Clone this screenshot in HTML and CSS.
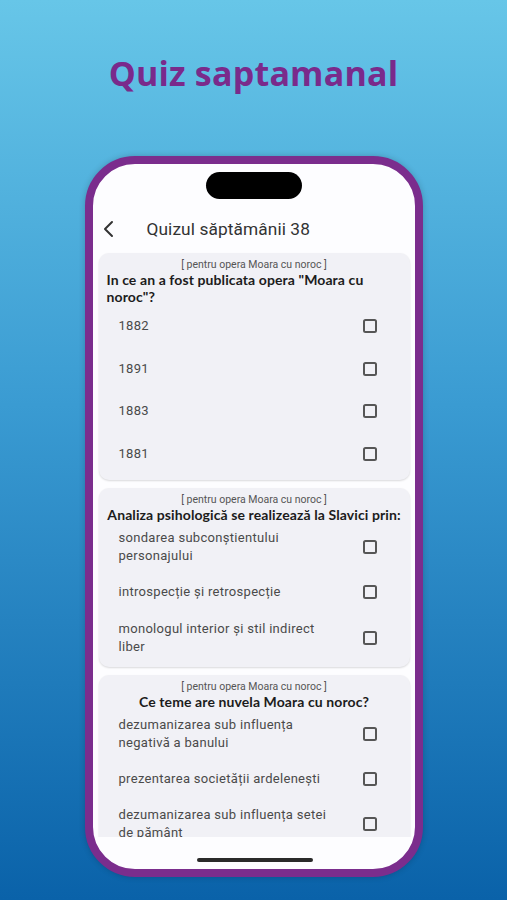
FILE: index.html
```html
<!DOCTYPE html>
<html lang="ro">
<head>
<meta charset="utf-8">
<title>Quiz saptamanal</title>
<link rel="stylesheet" href="styles.css">
</head>
<body>
<div class="page">
  <h1 class="title">Quiz saptamanal</h1>
  <div class="phone">
    <div class="status"><div class="island"></div></div>
    <div class="header">
      <svg class="back" width="12" height="18" viewBox="0 0 12 18"><path d="M9 2 L2 9 L9 16" fill="none" stroke="#333" stroke-width="2" stroke-linecap="round" stroke-linejoin="round"/></svg>
      <span class="header-title">Quizul săptămânii 38</span>
    </div>
    <div class="list">
      <div class="card">
        <div class="label">[ pentru opera Moara cu noroc ]</div>
        <div class="question">In ce an a fost publicata opera "Moara cu noroc"?</div>
        <div class="option"><span class="opt-text">1882</span><span class="box"></span></div>
        <div class="option"><span class="opt-text">1891</span><span class="box"></span></div>
        <div class="option"><span class="opt-text">1883</span><span class="box"></span></div>
        <div class="option"><span class="opt-text">1881</span><span class="box"></span></div>
      </div>
      <div class="card">
        <div class="label">[ pentru opera Moara cu noroc ]</div>
        <div class="question">Analiza psihologică se realizează la Slavici prin:</div>
        <div class="option"><span class="opt-text">sondarea subconștientului personajului</span><span class="box"></span></div>
        <div class="option"><span class="opt-text">introspecție și retrospecție</span><span class="box"></span></div>
        <div class="option"><span class="opt-text">monologul interior și stil indirect liber</span><span class="box"></span></div>
      </div>
      <div class="card">
        <div class="label">[ pentru opera Moara cu noroc ]</div>
        <div class="question">Ce teme are nuvela Moara cu noroc?</div>
        <div class="option"><span class="opt-text">dezumanizarea sub influența negativă a banului</span><span class="box"></span></div>
        <div class="option"><span class="opt-text">prezentarea societății ardelenești</span><span class="box"></span></div>
        <div class="option"><span class="opt-text">dezumanizarea sub influența setei de pământ</span><span class="box"></span></div>
      </div>
    </div>
    <div class="bottom"><div class="home"></div></div>
  </div>
</div>
</body>
</html>
```

FILE: styles.css
```css
html, body {
  margin: 0;
  padding: 0;
}
body {
  width: 507px;
  height: 900px;
  overflow: hidden;
  background: linear-gradient(180deg, #67c6e8 0%, #3a9bd2 45%, #0a62a9 100%);
  font-family: Roboto, "Noto Sans", sans-serif;
}
.page {
  display: flex;
  flex-direction: column;
  align-items: center;
}
.title {
  margin: 52px 0 0;
  height: 42px;
  line-height: 42px;
  font-family: "Open Sans", sans-serif;
  font-weight: 700;
  font-size: 34px;
  color: #7a2a8b;
  letter-spacing: 0.2px;
}
.phone {
  margin-top: 62px;
  width: 338px;
  height: 721px;
  box-sizing: border-box;
  border: 8px solid #7b2d8d;
  border-radius: 50px;
  background: #fdfdff;
  box-shadow: 0 0 6px rgba(0, 0, 0, 0.2);
  display: flex;
  flex-direction: column;
  overflow: hidden;
}
.status {
  height: 46px;
  flex: none;
  display: flex;
  justify-content: center;
  padding-top: 8px;
  box-sizing: border-box;
}
.island {
  width: 96px;
  height: 27px;
  border-radius: 14px;
  background: #000;
}
.header {
  height: 38px;
  flex: none;
  display: flex;
  align-items: center;
  padding-left: 10px;
}
.back {
  display: block;
}
.header-title {
  margin-left: 32px;
  font-size: 17.3px;
  color: #333;
  letter-spacing: 0.1px;
}
.list {
  height: 589px;
  flex: none;
  overflow: hidden;
  padding: 5px 5px 0 6px;
  box-sizing: border-box;
  display: flex;
  flex-direction: column;
  gap: 8px;
}
.card {
  flex: none;
  background: #f1f1f6;
  border-radius: 10px;
  padding: 6px 0 5px;
  box-shadow: 0 1px 2px rgba(0, 0, 0, 0.14);
}
.label {
  font-size: 10.5px;
  line-height: 12px;
  color: #555;
  text-align: center;
}
.question {
  width: fit-content;
  margin: 0 auto;
  padding: 0 8px;
  font-family: Lato, "Noto Sans", sans-serif;
  font-weight: 700;
  font-size: 14px;
  line-height: 17px;
  letter-spacing: 0.1px;
  color: #1c1c1c;
}
.option {
  min-height: 42.5px;
  box-sizing: border-box;
  padding: 6px 33px 6px 20px;
  display: flex;
  align-items: center;
  justify-content: space-between;
}
.opt-text {
  max-width: 222px;
  font-size: 13px;
  line-height: 18px;
  color: #4a4a4a;
  letter-spacing: 0.3px;
}
.box {
  flex: none;
  width: 14px;
  height: 14px;
  box-sizing: border-box;
  border: 2px solid #565656;
  border-radius: 2.5px;
}
.bottom {
  flex: 1;
  position: relative;
}
.home {
  position: absolute;
  left: 104px;
  top: 21px;
  width: 116px;
  height: 4px;
  border-radius: 2px;
  background: #2a2a2a;
}
```
